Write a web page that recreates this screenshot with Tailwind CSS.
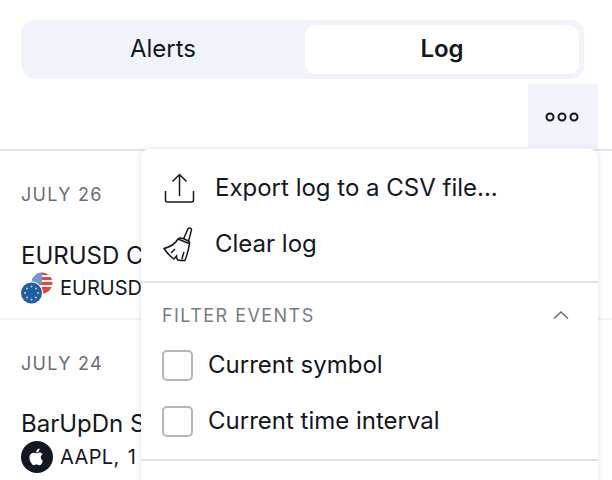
<!DOCTYPE html>
<html><head><meta charset="utf-8"><script src="https://cdn.jsdelivr.net/npm/@tailwindcss/browser@4"></script></head>
<body class="bg-white">
<div class="relative w-[612px] h-[480px] overflow-hidden font-['Inter',sans-serif] text-[#131722]">
  <div class="pt-[20px] pl-[21px] pr-[28px]">
    <div class="flex h-[59px] p-[5px] rounded-[14px] bg-[#f0f3fa]">
      <div class="w-[279px] flex items-center justify-center text-[24px] pr-[5px] pb-[1px]">Alerts</div>
      <div class="flex-1 flex items-center justify-center text-[24px] font-semibold bg-white rounded-[10px] pb-[1px]">Log</div>
    </div>
  </div>
  <div class="flex justify-end pr-[14px] pt-[5px] h-[72px] border-b-2 border-[#e0e3eb]">
    <div class="w-[70px] h-[64px] bg-[#f0f3fa] flex items-center justify-center pr-[2px] pt-[1px]">
      <svg width="36" height="12" viewBox="0 0 36 12" fill="none" stroke="#131722" stroke-width="2"><circle cx="6" cy="6" r="3.5"/><circle cx="18" cy="6" r="3.5"/><circle cx="30" cy="6" r="3.5"/></svg>
    </div>
  </div>
  <div class="h-[169px] border-b-2 border-[#f0f3fa] pl-[21px]">
    <div class="pt-[33px] text-[18px] leading-[22px] tracking-[1.3px] text-[#6a6d78]">JULY 26</div>
    <div class="pt-[35px] text-[24px] leading-[30px] whitespace-nowrap">EURUSD Crossing</div>
    <div class="flex items-center gap-[7px] h-[28px] mt-[3px]">
      <svg width="32" height="32" viewBox="0 0 32 32"><circle cx="21" cy="11" r="10.5" fill="#e8433f"/><path d="M11 3h20v2H11zM11 8h21v2H11zM11 13h21v2H11z" fill="#fff"/><path d="M21 .5a10.500 10.500 0 0 0-10 8v3h10z" fill="#6f9ad8"/><circle cx="10.500" cy="21" r="11.500" fill="#fff"/><circle cx="10.500" cy="21" r="10.500" fill="#1c5ea8"/><g fill="#e8d27a"><circle cx="10.500" cy="14.500" r="1"/><circle cx="10.500" cy="27.500" r="1"/><circle cx="4" cy="21" r="1"/><circle cx="17" cy="21" r="1"/><circle cx="6" cy="16.500" r="1"/><circle cx="15" cy="16.500" r="1"/><circle cx="6" cy="25.500" r="1"/><circle cx="15" cy="25.500" r="1"/></g></svg>
      <span class="text-[20px] whitespace-nowrap">EURUSD, 1D</span>
    </div>
  </div>
  <div class="pl-[21px]">
    <div class="pt-[33px] text-[18px] leading-[22px] tracking-[1.3px] text-[#6a6d78]">JULY 24</div>
    <div class="pt-[34px] text-[24px] leading-[30px] whitespace-nowrap">BarUpDn Strategy</div>
    <div class="flex items-center gap-[7px] h-[32px] mt-[2px]">
      <div class="w-[32px] h-[32px] rounded-full bg-[#131722] flex items-center justify-center">
        <svg width="18" height="18" viewBox="0 0 24 24" fill="#fff"><path d="M17.05 12.54c-.03-2.8 2.29-4.15 2.39-4.21-1.3-1.91-3.33-2.17-4.05-2.2-1.72-.17-3.37 1.01-4.24 1.01-.88 0-2.23-.99-3.67-.96-1.88.03-3.62 1.1-4.59 2.78-1.96 3.4-.5 8.43 1.41 11.19.93 1.35 2.04 2.87 3.5 2.81 1.41-.06 1.94-.91 3.64-.91s2.18.91 3.67.88c1.51-.03 2.47-1.37 3.4-2.73 1.07-1.57 1.51-3.09 1.54-3.17-.03-.01-2.96-1.14-3-4.49zM14.28 4.31c.77-.94 1.3-2.24 1.15-3.54-1.11.05-2.46.74-3.26 1.67-.71.83-1.34 2.16-1.17 3.43 1.24.1 2.51-.63 3.28-1.56z"/></svg>
      </div>
      <span class="text-[20px] whitespace-nowrap tracking-[0.4px] [word-spacing:2px]">AAPL, 1 day</span>
    </div>
  </div>

  <div class="absolute left-[141px] top-[149px] w-[457px] h-[340px] bg-white rounded-t-[8px] shadow-[0_0_6px_rgba(100,110,140,0.22)]">
    <div class="h-[134px] border-b-2 border-[#e0e3eb] pt-[11px]">
      <div class="flex items-center h-[56px] pl-[22px] gap-[19px]">
        <svg width="33" height="32" viewBox="0 0 33 32" fill="none" stroke="#131722" stroke-width="1.500" class="shrink-0"><path d="M16.500 24V2.500M9.500 9.500l7-7 7 7M2.500 19v9a2 2 0 0 0 2 2h24a2 2 0 0 0 2-2v-9"/></svg>
        <span class="text-[24px] whitespace-nowrap">Export log to a CSV file...</span>
      </div>
      <div class="flex items-center h-[56px] pl-[22px] gap-[19px]">
        <svg width="33" height="36" viewBox="0 0 33 36" fill="none" stroke="#131722" stroke-width="1.500" class="shrink-0"><path d="M20.500 13L25 2.800c.8-1.600 4-.6 3.400 1.300L25.500 15.500M15 13l11.500 4.800M15 13c1-1.300 3-1.300 5-.5l5 2.200c1.500.7 1.800 2 1.500 3.100M15 13C12 18 7 21 1 22.500 4 27 8 31 11 33l2.500-3c0 1.500.5 3 1 4 3 .5 5 .5 7.500.5 2-5.500 3.500-10.500 4.500-16.700M8 27l4-4M19 33c.5-2.500 1.200-4.500 2-7"/></svg>
        <span class="text-[24px]">Clear log</span>
      </div>
    </div>
    <div class="h-[178px] border-b-2 border-[#e0e3eb] pl-[21px] pr-[28px]">
      <div class="flex items-center justify-between h-[54px] pt-[10px]">
        <span class="text-[18px] tracking-[1.45px] text-[#787b86]">FILTER EVENTS</span>
        <svg width="18" height="10" viewBox="0 0 18 10" fill="none" stroke="#6a6d78" stroke-width="1.500"><path d="M2 8.500l7-6.500 7 6.500"/></svg>
      </div>
      <div class="flex items-center h-[56px] gap-[15px]">
        <div class="w-[31px] h-[31px] rounded-[5px] border-2 border-[#b2b5be] shrink-0"></div>
        <span class="text-[24px]">Current symbol</span>
      </div>
      <div class="flex items-center h-[56px] gap-[15px]">
        <div class="w-[31px] h-[31px] rounded-[5px] border-2 border-[#b2b5be] shrink-0"></div>
        <span class="text-[24px]">Current time interval</span>
      </div>
    </div>
  </div>
</div>
</body></html>
